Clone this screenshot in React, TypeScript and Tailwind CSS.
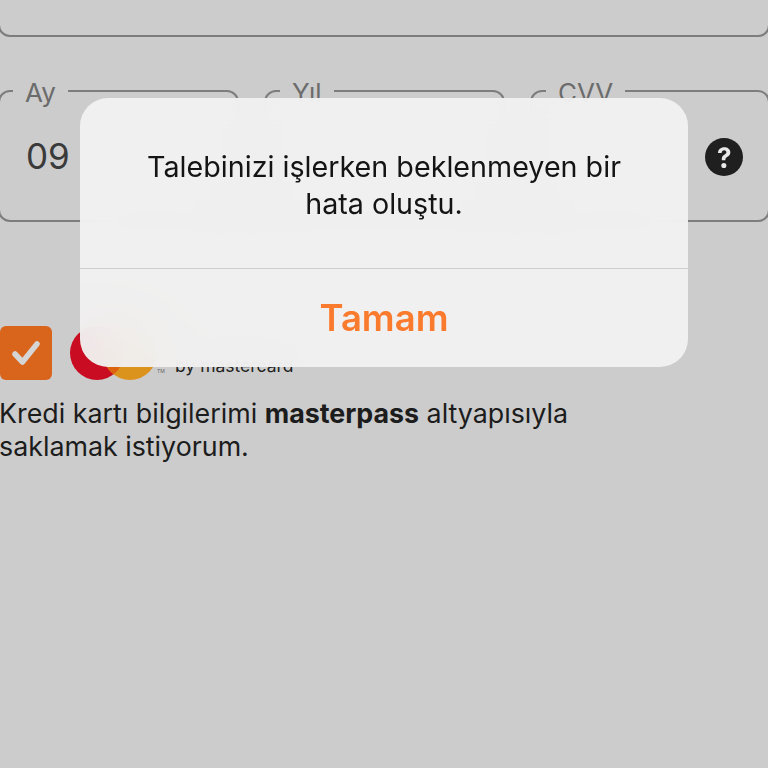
export default function App() {
  const font = { fontFamily: "Inter, 'Noto Sans', sans-serif" };
  return (
    <div style={font} className="relative w-[768px] h-[768px] overflow-hidden bg-[#cccccc] text-[#1c1c1c]">
      <div className="h-[37px] -mx-[2px] border-2 border-t-0 border-[#7d7d7d] rounded-b-xl" />
      <div className="mt-[39px] flex -ml-[2px] -mr-[2px]">
        <fieldset className="w-[241px] h-[146px] border-2 border-[#7d7d7d] rounded-xl pl-[26px] flex flex-col">
          <legend className="px-[12px] -ml-[13px] pt-[4px] text-[26px] leading-[26px] text-[#6b6b6b]">Ay</legend>
          <div className="mt-[28px] text-[35px] leading-[44px] text-[#3a3a3a]">09</div>
        </fieldset>
        <fieldset className="ml-[25px] w-[241px] h-[146px] border-2 border-[#7d7d7d] rounded-xl pl-[26px]">
          <legend className="px-[12px] -ml-[12px] pt-[4px] text-[26px] leading-[26px] text-[#6b6b6b]">Yıl</legend>
        </fieldset>
        <fieldset className="ml-[25px] w-[240px] h-[146px] border-2 border-[#7d7d7d] rounded-xl pl-[26px] pr-[25px]">
          <legend className="px-[12px] -ml-[12px] pt-[4px] text-[26px] leading-[26px] text-[#6b6b6b]">CVV</legend>
          <div className="mt-[32px] flex justify-end">
            <svg width="38" height="38" viewBox="0 0 24 24" className="block">
              <circle cx="12" cy="12" r="12" fill="#1f1f1f" />
              <path d="M8.2 9.4c.1-2.2 1.7-3.6 3.9-3.6 2.300 0 3.900 1.300 3.900 3.200 0 1.400-.7 2.200-1.800 2.900-1 .6-1.300 1-1.300 1.800v.4h-2.300v-.7c0-1.300.5-2.100 1.600-2.800.9-.6 1.300-1 1.300-1.600 0-.7-.6-1.200-1.400-1.200-.9 0-1.500.6-1.600 1.600z" fill="#e8e8e8" />
              <circle cx="11.900" cy="17.400" r="1.600" fill="#e8e8e8" />
            </svg>
          </div>
        </fieldset>
      </div>
      <div className="mt-[104px] flex items-center h-[54px]">
        <div className="w-[52px] h-[54px] rounded-md bg-[#d9641c] flex items-center justify-center">
          <svg width="32" height="32" viewBox="0 0 32 32" fill="none">
            <path d="M5 17l7.500 8L27 7" stroke="#d5d5d5" strokeWidth="5.500" strokeLinecap="round" strokeLinejoin="round" />
          </svg>
        </div>
        <div className="relative ml-[18px] w-[90px] h-[54px]">
          <svg width="90" height="54" viewBox="0 0 90 54">
            <circle cx="27" cy="27" r="27" fill="#c90c22" />
            <circle cx="60" cy="27" r="27" fill="#dc931e" />
            <path d="M43.500 5.600a27 27 0 0 1 0 42.800a27 27 0 0 1 0-42.800z" fill="#dd620f" />
          </svg>
          <span className="absolute left-[87px] top-[42px] text-[5px] leading-[6px] text-[#666]">TM</span>
        </div>
        <div className="ml-[15px] mt-[26px] text-[17.5px] leading-[24px] text-[#222]">by mastercard</div>
      </div>
      <p className="mt-[17px] -ml-[1px] text-[26.8px] leading-[32.5px] text-[#1c1c1c] w-[600px]">
        Kredi kartı bilgilerimi <b className="font-bold">masterpass</b> altyapısıyla saklamak istiyorum.
      </p>

      <div className="absolute left-[80px] top-[98px] w-[608px] h-[269px] rounded-[28px] bg-[#f1f1f1]/95 backdrop-blur-xl flex flex-col">
        <div className="h-[171px] border-b border-[#cdcdcd] pt-[50px] px-[50px] text-center text-[28.7px] leading-[37px] text-[#141414]">
          Talebinizi işlerken beklenmeyen bir hata oluştu.
        </div>
        <div className="flex-1 flex items-center justify-center text-[36.5px] font-semibold text-[#fa7b2e]">Tamam</div>
      </div>
    </div>
  );
}
